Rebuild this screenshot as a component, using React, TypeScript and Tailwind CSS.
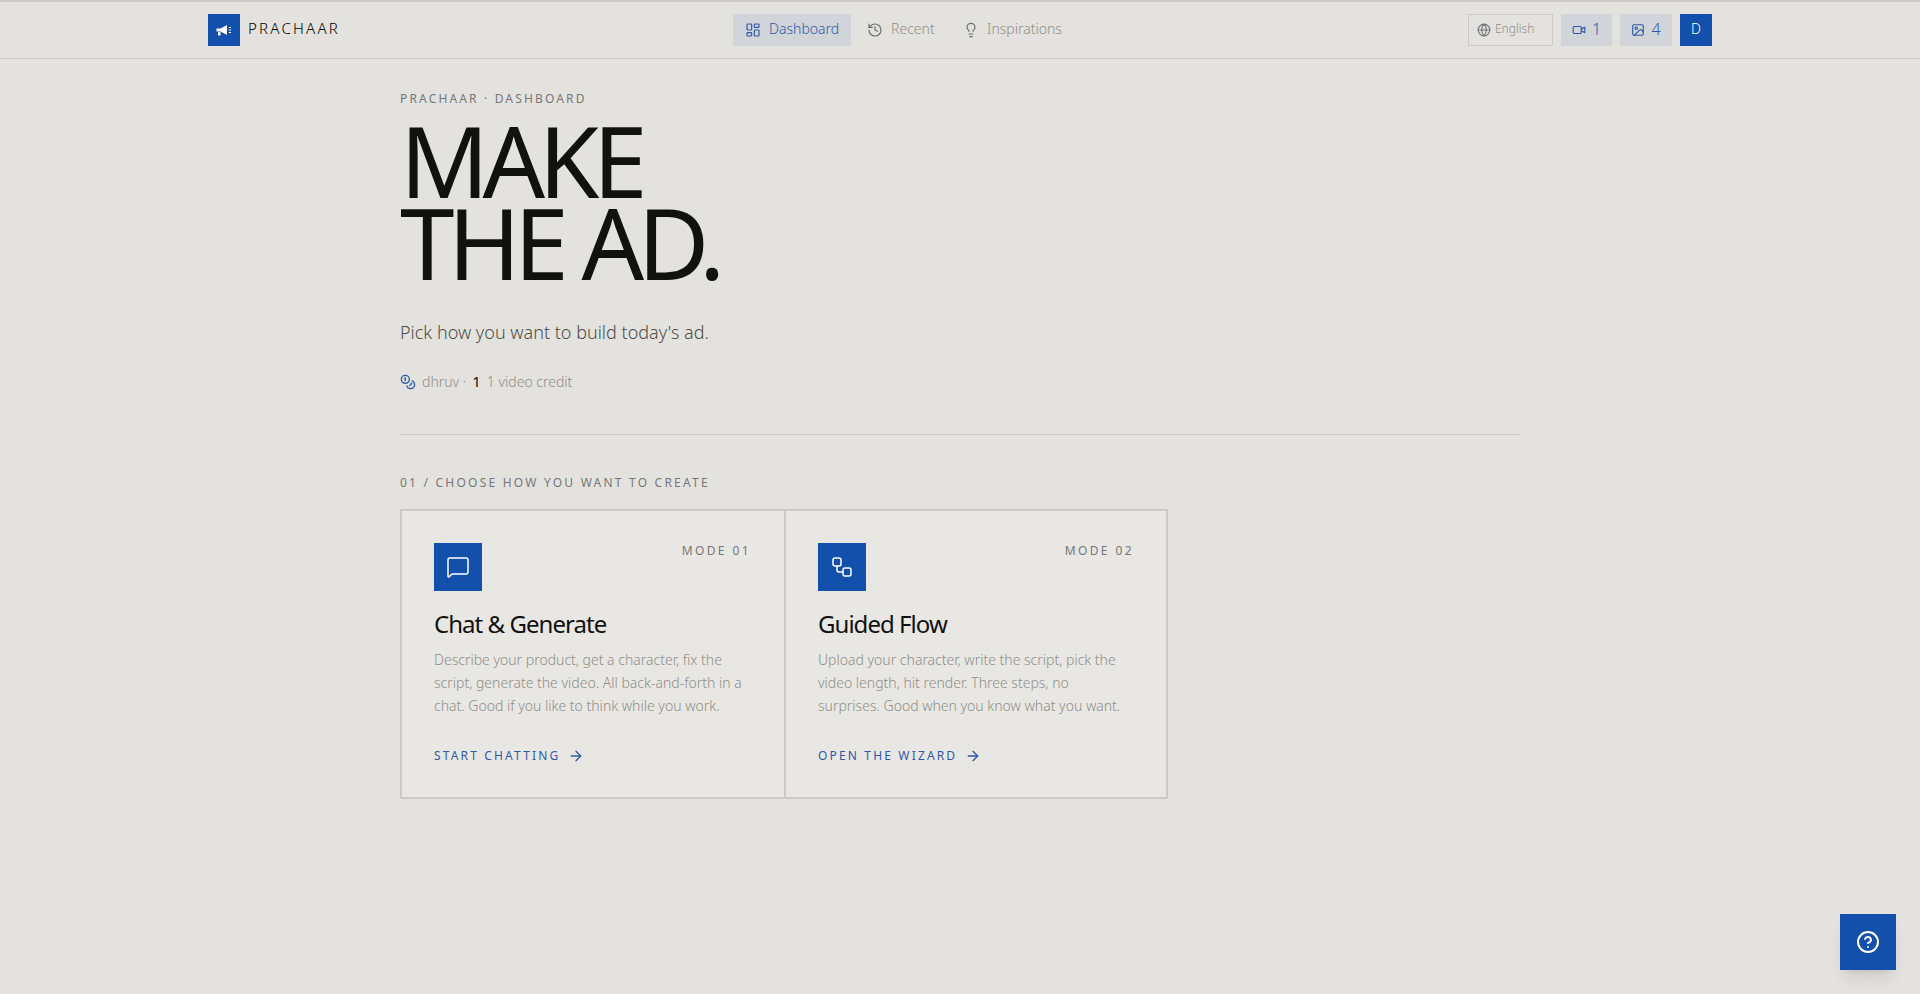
import { ArrowRight, CircleHelp, Coins, Globe, History, Image, LayoutDashboard, Lightbulb, MessageSquare, Video, Workflow } from 'lucide-react';

const font = "font-['Noto_Sans',sans-serif]";

const modes = [
  {
    mode: 'MODE 01',
    title: 'Chat & Generate',
    text: 'Describe your product, get a character, fix the script, generate the video. All back-and-forth in a chat. Good if you like to think while you work.',
    cta: 'START CHATTING',
    icon: MessageSquare,
  },
  {
    mode: 'MODE 02',
    title: 'Guided Flow',
    text: 'Upload your character, write the script, pick the video length, hit render. Three steps, no surprises. Good when you know what you want.',
    cta: 'OPEN THE WIZARD',
    icon: Workflow,
  },
];

function LogoIcon() {
  return (
    <svg width="16" height="16" viewBox="0 0 16 16" fill="none">
      <path d="M0.5 6.5H4.5L11 3V13L4.5 9.5H0.5Z" fill="white" />
      <path d="M2 10H4.5V13.5H2Z" fill="white" />
      <path d="M12.8 5.5H15M12.8 8H15M12.8 10.5H15" stroke="white" strokeWidth="1" />
    </svg>
  );
}

export default function App() {
  return (
    <div className={`${font} min-h-[994px] bg-[#e3e2de] text-[#111110]`}>
      {/* Header */}
      <header className="h-[59px] border-t-2 border-b border-t-[#cbcac5] border-b-[#cbcac5]">
        <div className="mx-auto flex h-full w-[1504px] items-center justify-between">
          <div className="flex items-center gap-2">
            <div className="flex h-8 w-8 items-center justify-center bg-[#1250ac] text-white">
              <LogoIcon />
            </div>
            <span className="pb-[4px] text-[15px] font-light tracking-[0.15em] text-black">PRACHAAR</span>
          </div>

          <nav className="flex items-center gap-1 text-sm font-light">
            <div className="flex h-8 w-[118px] items-center gap-2 bg-[#d1d5d9] pl-3 text-[#2f5aa8]">
              <LayoutDashboard size={16} strokeWidth={1.75} />
              <span className="pb-[2px]">Dashboard</span>
            </div>
            <div className="flex h-8 w-[92px] items-center gap-2 pl-3 text-[#8f8f8b]">
              <History size={16} strokeWidth={1.75} className="text-[#6f6f6b]" />
              <span className="pb-[2px]">Recent</span>
            </div>
            <div className="flex h-8 w-[124px] items-center gap-2 pl-3 text-[#8f8f8b]">
              <Lightbulb size={16} strokeWidth={1.75} className="text-[#6f6f6b]" />
              <span className="pb-[2px]">Inspirations</span>
            </div>
          </nav>

          <div className="flex items-center gap-2">
            <div className="flex h-8 w-[85px] items-center gap-1 border border-[#cbcac5] px-2 text-xs font-light text-[#8f8f8b]">
              <Globe size={14} className="text-[#77777a]" />
              <span className="pb-[2px]">English</span>
            </div>
            <div className="flex h-8 w-[51px] items-center justify-center gap-1.5 bg-[#d1d5d9] text-base font-light text-[#2f5aa8]">
              <Video size={14} />
              <span className="pb-[3px]">1</span>
            </div>
            <div className="flex h-8 w-[52px] items-center justify-center gap-1.5 bg-[#d1d5d9] text-base font-light text-[#2f5aa8]">
              <Image size={14} />
              <span className="pb-[3px]">4</span>
            </div>
            <div className="flex h-8 w-8 items-center justify-center bg-[#1250ac] pb-[2px] text-sm font-light text-white">D</div>
          </div>
        </div>
      </header>

      <main className="mx-auto w-[1120px] pt-[32px]">
        <p className="text-xs leading-[16px] tracking-[0.18em] text-[#77777a]">PRACHAAR · DASHBOARD</p>
        <h1 className="mt-[12px] text-[98px] leading-[82px] font-normal tracking-[-0.065em]">
          MAKE
          <br />
          THE AD.
        </h1>
        <p className="mt-[35px] text-lg leading-[28px] font-light text-[#4f4f4a]">Pick how you want to build today's ad.</p>
        <div className="mt-[25px] flex items-center gap-[6px] text-sm font-light text-[#8f8f8b]">
          <Coins size={16} className="text-[#2f5aa8]" />
          <span>dhruv ·</span>
          <span className="text-[15px] font-normal text-[#111110]">1</span>
          <span>1 video credit</span>
        </div>

        <div className="mt-[42px] border-t border-[#cbcac5]" />

        <p className="mt-[40px] text-xs leading-[16px] tracking-[0.185em] text-[#77777a]">01 / CHOOSE HOW YOU WANT TO CREATE</p>

        <div className="mt-[18px] grid w-[768px] grid-cols-2">
          {modes.map((m, i) => {
            const Icon = m.icon;
            return (
              <div key={m.mode} className={`h-[290px] border-2 border-[#cbcac5] bg-[#e8e7e3] pt-8 pl-8 ${i === 0 ? 'border-r-0 pr-[33px]' : 'pr-8'}`}>
                <div className="flex items-start justify-between">
                  <div className="flex h-12 w-12 items-center justify-center bg-[#1250ac] text-white">
                    <Icon size={24} strokeWidth={1.5} />
                  </div>
                  <span className="text-xs tracking-[0.2em] text-[#77777a]">{m.mode}</span>
                </div>
                <h2 className="mt-[17px] text-2xl leading-[32px] tracking-[-0.04em]">{m.title}</h2>
                <p className="mt-[8px] max-w-[312px] text-sm leading-[23px] font-light text-[#8f8f8b]">{m.text}</p>
                <div className="mt-[31px] flex items-center gap-2 text-xs tracking-[0.18em] text-[#2f5aa8]">
                  <span>{m.cta}</span>
                  <ArrowRight size={16} />
                </div>
              </div>
            );
          })}
        </div>
      </main>

      <button className="fixed right-[24px] bottom-[24px] flex h-14 w-14 items-center justify-center bg-[#1250ac] text-white shadow-lg">
        <CircleHelp size={24} />
      </button>
    </div>
  );
}
